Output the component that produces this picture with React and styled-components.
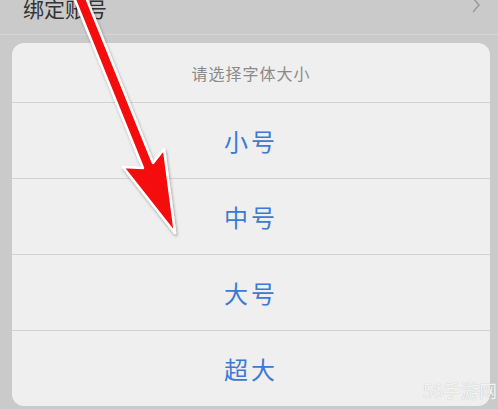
import React from "react";
import styled, { createGlobalStyle } from "styled-components";

const GlobalStyle = createGlobalStyle`
  html, body {
    margin: 0;
    padding: 0;
    background: #cacaca;
    font-family: "Noto Sans CJK SC", "Noto Sans", sans-serif;
  }
`
const Page = styled.div`
  position: relative;
  width: 498px;
  height: 409px;
  overflow: hidden;
  background: #cacaca;
`
const ListRow = styled.div`
  display: flex;
  align-items: center;
  justify-content: space-between;
  height: 52px;
  margin-top: -20px;
  padding: 2px 17px 0 23px;
  border-bottom: 1px solid #d6d6d6;
`
const RowLabel = styled.span`
  font-size: 21px;
  color: #333;
  line-height: 1;
`
const Chevron = styled.svg`
  width: 10px;
  height: 16px;
  margin-top: -6px;
`
const Sheet = styled.div`
  margin: 8px 8px 0 12px;
  background: #efefef;
  border-radius: 12px;
  overflow: hidden;
`
const SheetTitle = styled.div`
  height: 59px;
  display: flex;
  align-items: center;
  justify-content: center;
  font-size: 16px;
  letter-spacing: 1px;
  color: #8a8a8a;
`
const Option = styled.div`
  height: 75px;
  border-top: 1px solid #d2d2d2;
  display: flex;
  align-items: center;
  justify-content: center;
  font-size: 24px;
  letter-spacing: 3px;
  color: #3c7ad3;
`
const Arrow = styled.svg`
  position: absolute;
  left: 0;
  top: 0;
  width: 498px;
  height: 409px;
  pointer-events: none;
`
const Watermark = styled.div`
  position: absolute;
  right: 1px;
  bottom: 6px;
  font-size: 18px;
  color: #f4f4f4;
  text-shadow: 0 0 1px #b5b5b5;
`

const sizes = ["小号", "中号", "大号", "超大"];

const App = () => {
  return (
    <Page>
      <GlobalStyle />
      <ListRow>
        <RowLabel>绑定账号</RowLabel>
        <Chevron viewBox="0 0 10 16">
          <path d="M2 1 L8 8 L2 15" fill="none" stroke="#9a9a9a" strokeWidth="1.5" />
        </Chevron>
      </ListRow>
      <Sheet>
        <SheetTitle>请选择字体大小</SheetTitle>
        {sizes.map((s) => (
          <Option key={s}>{s}</Option>
        ))}
      </Sheet>
      <Watermark>56手游网</Watermark>
      <Arrow viewBox="0 0 498 409">
        <defs>
          <filter id="shade" x="-20%" y="-20%" width="140%" height="140%">
            <feDropShadow dx="1" dy="2" stdDeviation="1.5" floodColor="#000" floodOpacity="0.35" />
          </filter>
        </defs>
        <polygon
          points="71,-10 83,-10 153,163 164,149 175,233 123,167 143,168"
          fill="#f50a0a"
          stroke="#fff"
          strokeWidth="2.5"
          strokeLinejoin="round"
          filter="url(#shade)"
        />
      </Arrow>
    </Page>
  );
};

export default App;
